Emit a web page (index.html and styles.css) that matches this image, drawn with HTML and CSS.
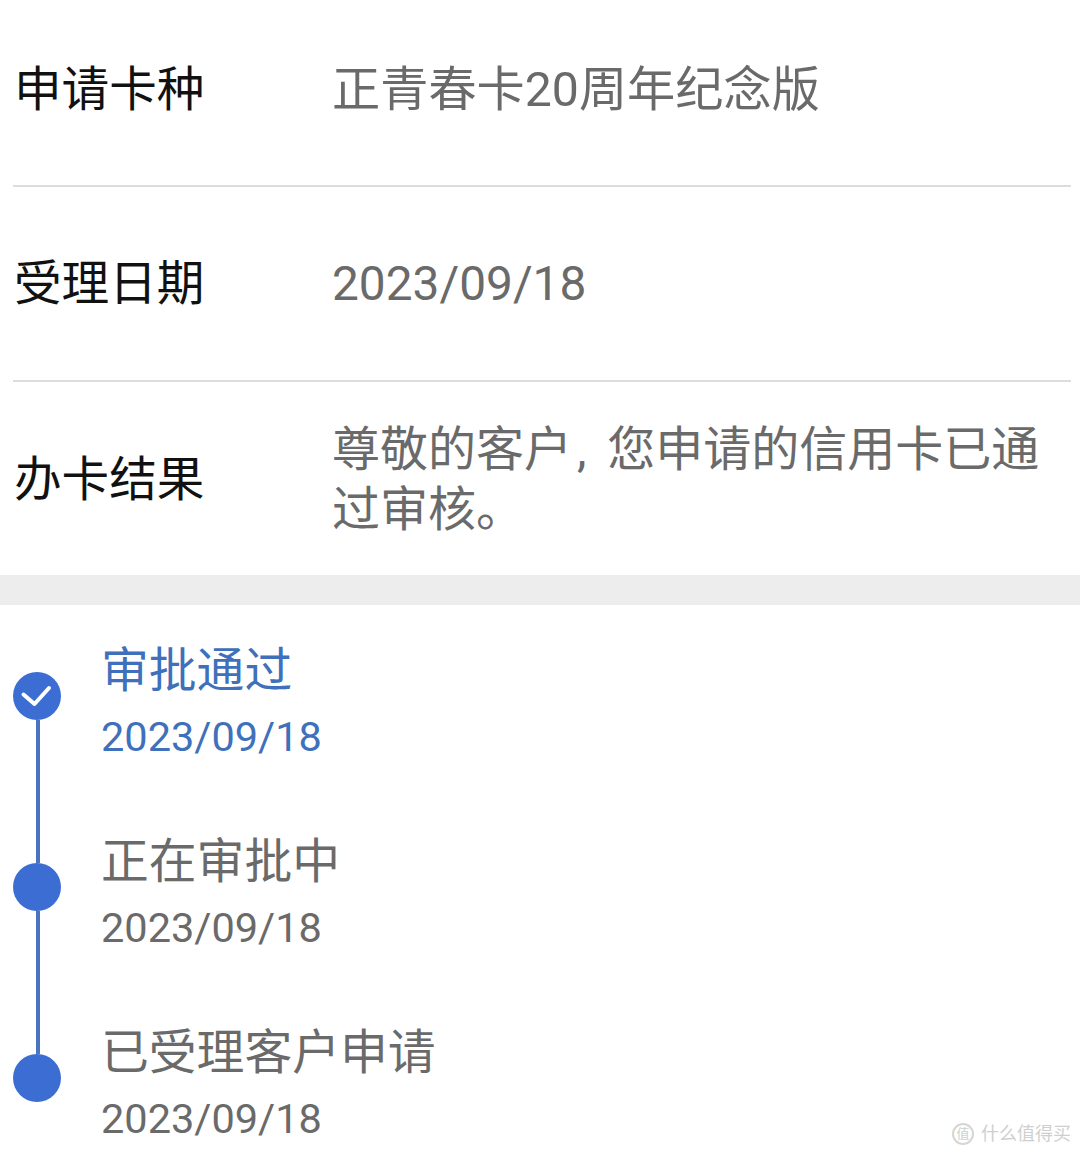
FILE: index.html
```html
<!DOCTYPE html>
<html lang="zh-CN">
<head>
<meta charset="utf-8">
<title>申请进度</title>
<link rel="stylesheet" href="styles.css">
</head>
<body>
<section class="info">
  <div class="row row-a">
    <div class="label">申请卡种</div>
    <div class="value">正青春卡20周年纪念版</div>
  </div>
  <div class="row row-b">
    <div class="label">受理日期</div>
    <div class="value digits">2023/09/18</div>
  </div>
  <div class="row row-c">
    <div class="label">办卡结果</div>
    <div class="value multi">尊敬的客户&#8202;, 您申请的信用卡已通过审核。</div>
  </div>
</section>
<div class="band"></div>
<section class="timeline">
  <div class="step active">
    <div class="text">
      <div class="title">审批通过</div>
      <div class="date">2023/09/18</div>
    </div>
    <div class="dot">
      <svg class="check" viewBox="0 0 48 48" width="48" height="48"><path d="M10.5 22.5 L21.5 32 L36 16" fill="none" stroke="#fff" stroke-width="4" stroke-linecap="round" stroke-linejoin="round"/></svg>
    </div>
    <div class="line"></div>
  </div>
  <div class="step">
    <div class="text">
      <div class="title">正在审批中</div>
      <div class="date">2023/09/18</div>
    </div>
    <div class="dot"></div>
    <div class="line"></div>
  </div>
  <div class="step last">
    <div class="text">
      <div class="title">已受理客户申请</div>
      <div class="date">2023/09/18</div>
    </div>
    <div class="dot"></div>
  </div>
</section>
<div class="watermark"><span class="wm-mark">值</span><span>什么值得买</span></div>
</body>
</html>
```
FILE: styles.css
```css
* { box-sizing: border-box; }
html, body { margin: 0; padding: 0; }
body {
  width: 1080px;
  height: 1156px;
  overflow: hidden;
  background: #fff;
  position: relative;
  font-family: Roboto, "Noto Sans CJK SC", sans-serif;
}
.info { padding: 0 9px 0 13px; }
.row {
  display: flex;
  align-items: center;
  border-bottom: 2px solid #dcdcdc;
}
.row-a { height: 187px; padding-bottom: 6px; }
.row-b { height: 195px; padding-bottom: 0; }
.row-c { height: 193px; border-bottom: 0; padding-top: 2px; }
.label {
  width: 319px;
  flex: none;
  font-size: 47.6px;
  line-height: 60px;
  color: #111;
  padding-left: 1px;
}
.value {
  font-size: 48.2px;
  line-height: 60px;
  color: #6a6a6a;
}
.digits { font-size: 47.8px; }
.multi { font-size: 48px; word-spacing: 9px; }
.band { height: 30px; background: #ededed; }
.timeline { padding: 36px 0 0 13px; }
.step {
  position: relative;
  height: 191px;
  padding-left: 88px;
}
.step.last { height: auto; }
.title {
  font-size: 47.8px;
  line-height: 60px;
  color: #6a6a6a;
}
.date {
  font-size: 41.5px;
  line-height: 50px;
  margin-top: 11px;
  color: #6a6a6a;
}
.active .title, .active .date { color: #3f70bb; }
.dot {
  position: absolute;
  left: 0;
  top: 31px;
  width: 48px;
  height: 48px;
  border-radius: 50%;
  background: #3b6dd3;
}
.check { display: block; }
.line {
  position: absolute;
  left: 23px;
  top: 79px;
  width: 4px;
  height: 143px;
  background: #4a73c0;
}
.watermark {
  position: absolute;
  left: 952px;
  top: 1122px;
  display: flex;
  align-items: center;
  gap: 7px;
  font-size: 18px;
  line-height: 24px;
  color: #cfcfcf;
}
.wm-mark {
  width: 22px;
  height: 22px;
  border: 2px solid #d6d6d6;
  border-radius: 50%;
  font-size: 13px;
  line-height: 18px;
  text-align: center;
}
```
